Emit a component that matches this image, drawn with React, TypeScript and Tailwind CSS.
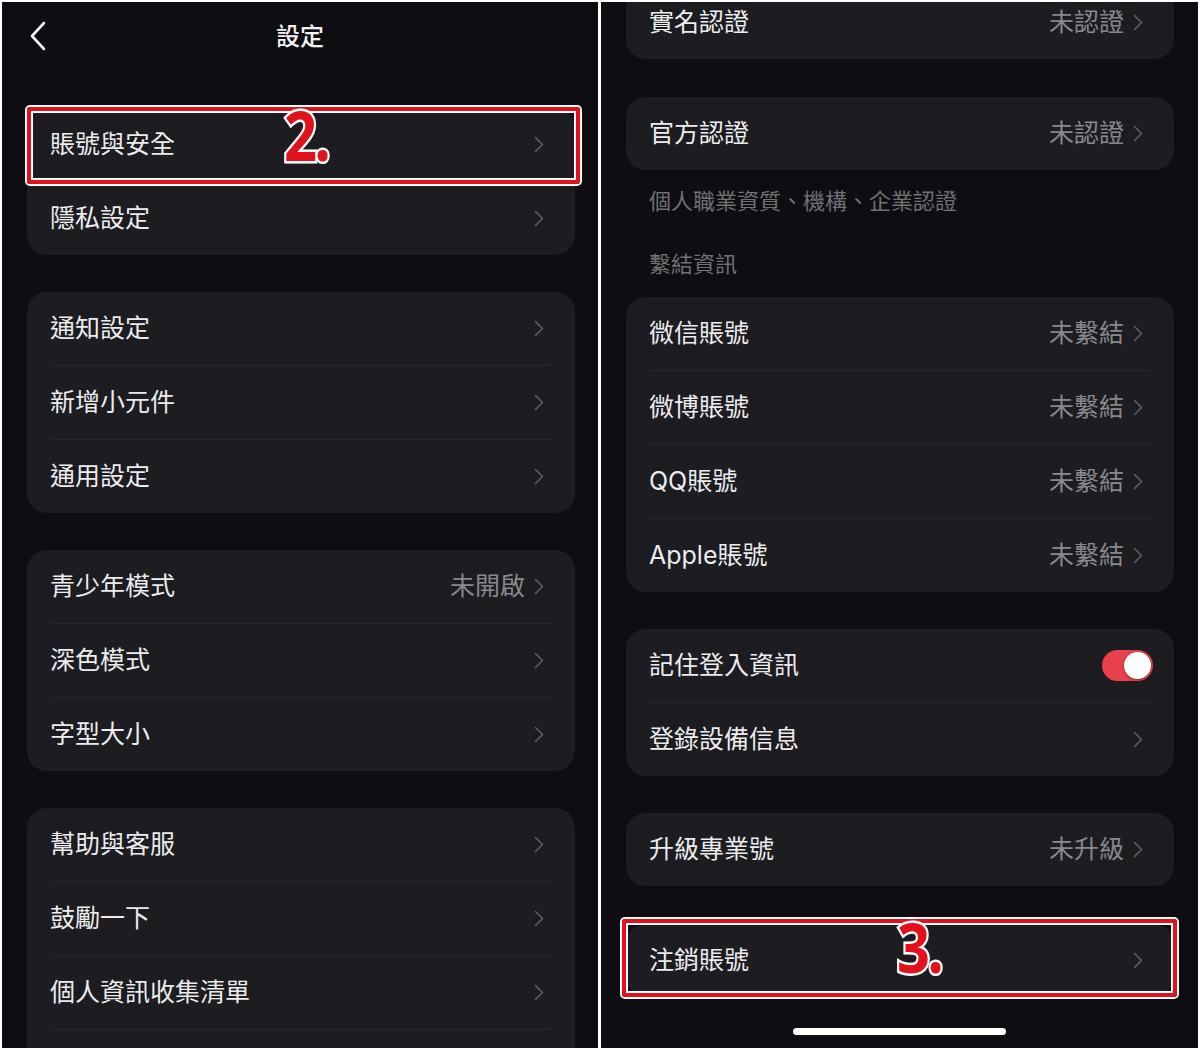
import React from 'react';

type Row = {
  label: string;
  value?: string;
  toggle?: boolean;
  blank?: boolean;
};

const FONT = { fontFamily: '"Inter", "Noto Sans CJK TC", sans-serif' };

function Chevron() {
  return (
    <svg width="10" height="17" viewBox="0 0 10 17" fill="none" className="shrink-0">
      <polyline points="1.5,1.5 8.5,8.5 1.5,15.5" stroke="#5c5c62" strokeWidth="1.6" strokeLinecap="round" strokeLinejoin="round" />
    </svg>
  );
}

function Toggle() {
  return (
    <div className="w-[51px] h-[31px] rounded-full bg-[#e8404c] flex items-center justify-end p-[2px]">
      <div className="w-[27px] h-[27px] rounded-full bg-white shadow-[0_1px_3px_rgba(0,0,0,0.35)]" />
    </div>
  );
}

// red annotation frame drawn over a row
function Mark({ text, left, className }: { text: string; left: number; className: string }) {
  return (
    <div className={`absolute rounded-[3px] border-[4px] border-[#e2121c] ring-2 ring-white inset-ring-2 inset-ring-white pointer-events-none ${className}`}>
      <span
        className="absolute top-[-10px] text-[68px] leading-none font-bold text-[#e2121c] [-webkit-text-stroke:5px_white] [paint-order:stroke_fill] tracking-[-3px] scale-x-[0.85] origin-left"
        style={{ fontFamily: '"Noto Sans", sans-serif', left }}
      >
        {text}
      </span>
    </div>
  );
}

function SettingRow({ row }: { row: Row }) {
  if (row.blank) return <div className="h-[73px]" />;
  return (
    <div className={`h-[73px] flex items-center justify-between pl-[23px] ${row.toggle ? 'pr-[21px]' : 'pr-[31px]'}`}>
      <span className="text-[25px] text-[#ececee]">{row.label}</span>
      {row.toggle ? (
        <Toggle />
      ) : (
        <div className="flex items-center gap-[9px]">
          {row.value && <span className="text-[25px] text-[#88888d]">{row.value}</span>}
          <Chevron />
        </div>
      )}
    </div>
  );
}

function Card({
  rows,
  mark,
  markLeft = 0,
  markClass,
  className = '',
}: {
  rows: Row[];
  mark?: string;
  markLeft?: number;
  markClass?: string;
  className?: string;
}) {
  return (
    <div className={`relative w-[548px] ml-[25px] rounded-[20px] bg-[#1c1c21] shrink-0 ${className}`}>
      {rows.map((r, i) => (
        <React.Fragment key={r.label}>
          {i > 0 && <div className="h-px mx-[24px] bg-[#28282d]" />}
          <SettingRow row={r} />
        </React.Fragment>
      ))}
      {mark && <Mark text={mark} left={markLeft} className={markClass || ''} />}
    </div>
  );
}

function LeftScreen() {
  return (
    <div className="w-[596px] h-[1046px] bg-[#0e0e12] overflow-hidden flex flex-col">
      <div className="h-[69px] shrink-0 relative flex items-center justify-center">
        <svg width="18" height="30" viewBox="0 0 18 30" fill="none" className="absolute left-[27px] top-[19px]">
          <polyline points="15,2 3,15 15,28" stroke="#f2f2f2" strokeWidth="2.6" strokeLinecap="round" strokeLinejoin="round" />
        </svg>
        <span className="text-[24px] font-medium text-[#f2f2f2]">設定</span>
      </div>
      <div className="flex flex-col gap-[37px] mt-[37px]">
        <Card
          rows={[{ label: '賬號與安全' }, { label: '隱私設定' }]}
          mark="2."
          markLeft={253}
          markClass="left-0 right-[-5px] top-[-1px] h-[77px]"
        />
        <Card rows={[{ label: '通知設定' }, { label: '新增小元件' }, { label: '通用設定' }]} />
        <Card rows={[{ label: '青少年模式', value: '未開啟' }, { label: '深色模式' }, { label: '字型大小' }]} />
        <Card
          rows={[{ label: '幫助與客服' }, { label: '鼓勵一下' }, { label: '個人資訊收集清單' }, { label: 'more', blank: true }]}
        />
      </div>
    </div>
  );
}

function RightScreen() {
  return (
    <div className="w-[597px] h-[1046px] bg-[#0e0e12] overflow-hidden flex flex-col">
      <Card rows={[{ label: '實名認證', value: '未認證' }]} className="mt-[-16px]" />
      <Card rows={[{ label: '官方認證', value: '未認證' }]} className="mt-[38px]" />
      <div className="h-[62px] shrink-0 flex items-center pl-[48px] text-[22px] text-[#707075]">
        個人職業資質、機構、企業認證
      </div>
      <div className="h-[65px] shrink-0 flex items-center pl-[48px] text-[22px] text-[#707075]">繫結資訊</div>
      <Card
        rows={[
          { label: '微信賬號', value: '未繫結' },
          { label: '微博賬號', value: '未繫結' },
          { label: 'QQ賬號', value: '未繫結' },
          { label: 'Apple賬號', value: '未繫結' },
        ]}
      />
      <Card rows={[{ label: '記住登入資訊', toggle: true }, { label: '登錄設備信息' }]} className="mt-[37px]" />
      <Card rows={[{ label: '升級專業號', value: '未升級' }]} className="mt-[37px]" />
      <Card
        rows={[{ label: '注銷賬號' }]}
        className="mt-[38px]"
        mark="3."
        markLeft={271}
        markClass="left-[-4px] right-[-3px] top-[-5px] bottom-0"
      />
      <div className="mt-[31px] mx-auto w-[213px] h-[7px] rounded-full bg-white shrink-0" />
    </div>
  );
}

export default function App() {
  return (
    <div className="w-[1200px] h-[1050px] bg-white p-[2px] flex gap-[3px]" style={FONT}>
      <LeftScreen />
      <RightScreen />
    </div>
  );
}
